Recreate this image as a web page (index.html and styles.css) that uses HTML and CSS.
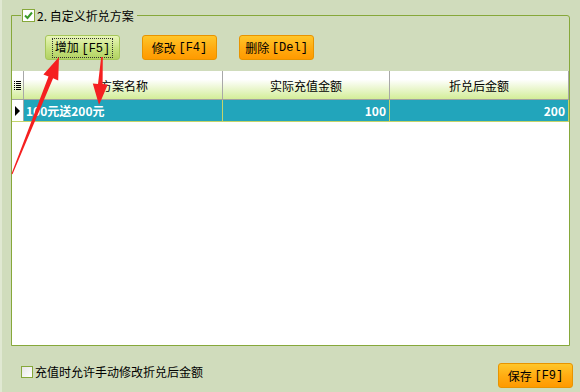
FILE: index.html
```html
<!DOCTYPE html>
<html lang="zh-CN">
<head>
    <meta charset="UTF-8">
    <title>自定义折兑方案</title>
    <link rel="stylesheet" href="styles.css">
</head>
<body>
    <fieldset class="group">
        <legend class="group-title">
            <span class="check checked">
                <svg width="11" height="11" viewBox="0 0 11 11"><path d="M2 5.5 L4.5 8 L9 2.5" fill="none" stroke="#3a9a2a" stroke-width="2"/></svg>
            </span>
            <span>2. 自定义折兑方案</span>
        </legend>

        <div class="toolbar">
            <button class="btn btn-green"><span class="focus">增加 <span class="key">[F5]</span></span></button>
            <button class="btn btn-orange">修改 <span class="key">[F4]</span></button>
            <button class="btn btn-orange">删除 <span class="key">[Del]</span></button>
        </div>

        <div class="grid">
            <div class="grid-row grid-head">
                <div class="cell indicator">
                    <svg width="7" height="9" viewBox="0 0 7 9"><path d="M0 0.5h1M2 0.5h5M0 2.5h1M2 2.5h5M0 4.5h1M2 4.5h5M0 6.5h1M2 6.5h5M0 8.5h1M2 8.5h5" stroke="#000" stroke-width="1"/></svg>
                </div>
                <div class="cell col-name">方案名称</div>
                <div class="cell col-pay">实际充值金额</div>
                <div class="cell col-get">折兑后金额</div>
            </div>
            <div class="grid-row grid-data selected">
                <div class="cell indicator"><span class="pointer"></span></div>
                <div class="cell col-name">100元送200元</div>
                <div class="cell col-pay num">100</div>
                <div class="cell col-get num">200</div>
            </div>
        </div>
    </fieldset>

    <div class="footer">
        <label class="option">
            <span class="check"></span>
            <span>充值时允许手动修改折兑后金额</span>
        </label>
        <button class="btn btn-orange">保存 <span class="key">[F9]</span></button>
    </div>

    <!-- red annotation arrows drawn over the screenshot -->
    <svg class="marks" width="580" height="392" viewBox="0 0 580 392">
        <polygon points="11.5,173.8 48.5,76.5 43.4,74.4 59,57 58.2,80.4 53.1,78.3 12.5,174.2" fill="#f52020"/>
        <polygon points="101.2,57 98,83.9 92.8,83.6 99,105 107.8,84.4 102.6,84.1 102.8,57" fill="#f52020"/>
    </svg>
</body>
</html>
```

FILE: styles.css
```css
body {
    margin: 0;
    width: 578px;
    height: 392px;
    background-color: #d0dcbc;
    border-left: 2px solid #e0e8d2;
    font-family: "Noto Sans CJK SC", "DejaVu Sans", sans-serif;
    font-size: 12px;
    color: #000;
    position: relative;
    overflow: hidden;
}
.group {
    margin: 9px 10px 0 9px;
    padding: 0;
    border: 1px solid #86a83a;
    border-top-right-radius: 3px;
    min-width: 0;
}
.group-title {
    margin-left: 9px;
    padding: 0 3px 0 1px;
    height: 13px;
    line-height: 13px;
    display: flex;
    align-items: center;
    gap: 2px;
}
.check {
    display: inline-block;
    box-sizing: border-box;
    width: 13px;
    height: 13px;
    border: 1px solid #86a83a;
    background: linear-gradient(135deg, #e6e6e6, #ffffff);
}
.check svg {
    display: block;
}
.check.checked {
    background: #fff;
}
.toolbar {
    display: flex;
    gap: 22px;
    padding: 13px 0 0 33px;
    height: 25px;
}
.btn {
    box-sizing: border-box;
    width: 75px;
    height: 25px;
    padding: 0;
    border-radius: 3px;
    font-family: "Noto Sans CJK SC", "DejaVu Sans", sans-serif;
    font-size: 12px;
    color: #000;
    display: flex;
    align-items: center;
    justify-content: center;
    white-space: pre;
    cursor: pointer;
}
.key {
    font-family: "Liberation Mono", monospace;
    font-size: 12px;
}
.btn-green {
    border: 1px solid #a6c65a;
    background: linear-gradient(#e8f5b8, #c4e07c 60%, #b2d262);
}
.btn-orange {
    border: 1px solid #e89400;
    background: linear-gradient(#ffc62a, #ffaa10 55%, #ff9a00);
}
.focus {
    border: 1px dotted #333;
    padding: 0 2px;
    line-height: 16px;
}
.grid {
    margin-top: 11px;
    height: 274px;
    background: #fff;
}
.grid-row {
    display: flex;
}
.grid-head {
    height: 28px;
    border-bottom: 1px solid #a0a0a0;
    background: linear-gradient(#ffffff 30%, #d3ed98);
}
.grid-head .cell {
    border-right: 1px solid #a8a8a8;
    justify-content: center;
}
.grid-data {
    height: 21px;
    border-bottom: 1px solid #c4d46a;
}
.grid-data .cell {
    border-right: 1px solid #c4d46a;
}
.selected {
    background: #22a5bb;
    color: #fff;
    font-weight: bold;
}
.cell {
    box-sizing: border-box;
    display: flex;
    align-items: center;
    overflow: hidden;
    white-space: nowrap;
}
.indicator {
    width: 12px;
    justify-content: center;
    background: #fff;
}
.grid-head .indicator {
    background: linear-gradient(#ffffff 30%, #d3ed98);
}
.grid-data .indicator {
    border-right: 1px solid #a8a8a8;
}
.pointer {
    width: 0;
    height: 0;
    border-top: 5px solid transparent;
    border-bottom: 5px solid transparent;
    border-left: 5px solid #000;
}
.col-name {
    width: 199px;
    padding-left: 2px;
}
.col-pay {
    width: 167px;
}
.col-get {
    width: 179px;
}
.num {
    justify-content: flex-end;
    padding-right: 3px;
}
.footer {
    display: flex;
    justify-content: space-between;
    align-items: flex-start;
    margin-top: 17px;
    padding: 0 7px 0 19px;
}
.option {
    display: flex;
    align-items: center;
    gap: 2px;
    margin-top: 2px;
    line-height: 13px;
}
.option .check {
    width: 12px;
    height: 12px;
}
.marks {
    position: absolute;
    left: -2px;
    top: 0;
    pointer-events: none;
}
```
